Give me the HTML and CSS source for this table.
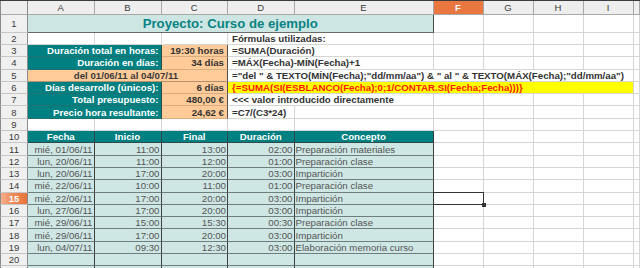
FILE: index.html
```html
<!DOCTYPE html>
<html lang="es">
<head>
<meta charset="utf-8">
<title>Proyecto: Curso de ejemplo</title>
<link rel="stylesheet" href="styles.css">
</head>
<body>
<div class="sheet">
  <div class="corner"></div>
  <div class="ch">A</div><div class="ch">B</div><div class="ch">C</div><div class="ch">D</div><div class="ch">E</div>
  <div class="ch ch-sel">F</div><div class="ch">G</div><div class="ch">H</div><div class="ch">I</div><div class="ch"></div>

  <div class="rh">1</div>
  <div class="title span5">Proyecto: Curso de ejemplo</div>
  <div class="c"></div><div class="c"></div><div class="c"></div><div class="c"></div><div class="c"></div>

  <div class="rh">2</div>
  <div class="c"></div><div class="c"></div><div class="c"></div>
  <div class="c f span2">Fórmulas utilizadas:</div>
  <div class="c"></div><div class="c"></div><div class="c"></div><div class="c"></div><div class="c"></div>

  <div class="rh">3</div>
  <div class="lab span2">Duración total en horas:</div>
  <div class="val">19:30 horas</div>
  <div class="c f span2">=SUMA(Duración)</div>
  <div class="c"></div><div class="c"></div><div class="c"></div><div class="c"></div><div class="c"></div>

  <div class="rh">4</div>
  <div class="lab span2">Duración en días:</div>
  <div class="val">34 días</div>
  <div class="c f span2">=MÁX(Fecha)-MÍN(Fecha)+1</div>
  <div class="c"></div><div class="c"></div><div class="c"></div><div class="c"></div><div class="c"></div>

  <div class="rh">5</div>
  <div class="val val-center span3">del 01/06/11 al 04/07/11</div>
  <div class="c f span6">="del " &amp; TEXTO(MÍN(Fecha);"dd/mm/aa") &amp; " al " &amp; TEXTO(MÁX(Fecha);"dd/mm/aa")</div>
  <div class="c"></div>

  <div class="rh">6</div>
  <div class="lab span2">Días desarrollo (únicos):</div>
  <div class="val">6 días</div>
  <div class="c f f-array span6">{=SUMA(SI(ESBLANCO(Fecha);0;1/CONTAR.SI(Fecha;Fecha)))}</div>
  <div class="c"></div>

  <div class="rh">7</div>
  <div class="lab span2">Total presupuesto:</div>
  <div class="val">480,00 €</div>
  <div class="c f span2">&lt;&lt;&lt; valor introducido directamente</div>
  <div class="c"></div><div class="c"></div><div class="c"></div><div class="c"></div><div class="c"></div>

  <div class="rh">8</div>
  <div class="lab span2">Precio hora resultante:</div>
  <div class="val">24,62 €</div>
  <div class="c f">=C7/(C3*24)</div>
  <div class="c"></div>
  <div class="c"></div><div class="c"></div><div class="c"></div><div class="c"></div><div class="c"></div>

  <div class="rh">9</div>
  <div class="c"></div><div class="c"></div><div class="c"></div><div class="c"></div><div class="c"></div>
  <div class="c"></div><div class="c"></div><div class="c"></div><div class="c"></div><div class="c"></div>

  <div class="rh">10</div>
  <div class="th">Fecha</div><div class="th">Inicio</div><div class="th">Final</div><div class="th">Duración</div><div class="th th-last">Concepto</div>
  <div class="c"></div><div class="c"></div><div class="c"></div><div class="c"></div><div class="c"></div>

  <div class="rh">11</div>
  <div class="td">mié, 01/06/11</div><div class="td">11:00</div><div class="td">13:00</div><div class="td">02:00</div><div class="td td-text">Preparación materiales</div>
  <div class="c"></div><div class="c"></div><div class="c"></div><div class="c"></div><div class="c"></div>

  <div class="rh">12</div>
  <div class="td">lun, 20/06/11</div><div class="td">11:00</div><div class="td">12:00</div><div class="td">01:00</div><div class="td td-text">Preparación clase</div>
  <div class="c"></div><div class="c"></div><div class="c"></div><div class="c"></div><div class="c"></div>

  <div class="rh">13</div>
  <div class="td">lun, 20/06/11</div><div class="td">17:00</div><div class="td">20:00</div><div class="td">03:00</div><div class="td td-text">Impartición</div>
  <div class="c"></div><div class="c"></div><div class="c"></div><div class="c"></div><div class="c"></div>

  <div class="rh">14</div>
  <div class="td">mié, 22/06/11</div><div class="td">10:00</div><div class="td">11:00</div><div class="td">01:00</div><div class="td td-text">Preparación clase</div>
  <div class="c"></div><div class="c"></div><div class="c"></div><div class="c"></div><div class="c"></div>

  <div class="rh rh-sel">15</div>
  <div class="td">mié, 22/06/11</div><div class="td">17:00</div><div class="td">20:00</div><div class="td">03:00</div><div class="td td-text">Impartición</div>
  <div class="c cursor"></div><div class="c"></div><div class="c"></div><div class="c"></div><div class="c"></div>

  <div class="rh">16</div>
  <div class="td">lun, 27/06/11</div><div class="td">17:00</div><div class="td">20:00</div><div class="td">03:00</div><div class="td td-text">Impartición</div>
  <div class="c"></div><div class="c"></div><div class="c"></div><div class="c"></div><div class="c"></div>

  <div class="rh">17</div>
  <div class="td">mié, 29/06/11</div><div class="td">15:00</div><div class="td">15:30</div><div class="td">00:30</div><div class="td td-text">Preparación clase</div>
  <div class="c"></div><div class="c"></div><div class="c"></div><div class="c"></div><div class="c"></div>

  <div class="rh">18</div>
  <div class="td">mié, 29/06/11</div><div class="td">17:00</div><div class="td">20:00</div><div class="td">03:00</div><div class="td td-text">Impartición</div>
  <div class="c"></div><div class="c"></div><div class="c"></div><div class="c"></div><div class="c"></div>

  <div class="rh">19</div>
  <div class="td">lun, 04/07/11</div><div class="td">09:30</div><div class="td">12:30</div><div class="td">03:00</div><div class="td td-text">Elaboración memoria curso</div>
  <div class="c"></div><div class="c"></div><div class="c"></div><div class="c"></div><div class="c"></div>

  <div class="rh">20</div>
  <div class="td"></div><div class="td"></div><div class="td"></div><div class="td"></div><div class="td"></div>
  <div class="c"></div><div class="c"></div><div class="c"></div><div class="c"></div><div class="c"></div>

  <div class="rh">21</div>
  <div class="td"></div><div class="td"></div><div class="td"></div><div class="td"></div><div class="td"></div>
  <div class="c"></div><div class="c"></div><div class="c"></div><div class="c"></div><div class="c"></div>
</div>
</body>
</html>
```

FILE: styles.css
```css
html, body {
  margin: 0;
  padding: 0;
  background: #ffffff;
  overflow: hidden;
}

.sheet {
  display: grid;
  grid-template-columns: 28px 66.5px 67px 66.5px 66.5px 139px 50px 50px 50px 50px 1fr;
  grid-template-rows: 14px 17.7px repeat(20, 12.3px);
  width: 640px;
  height: 268px;
  overflow: hidden;
  border-top: 1px solid #3c3c3c;
  box-sizing: border-box;
  font-family: "Liberation Sans", Arial, sans-serif;
  font-size: 9.7px;
  line-height: 11px;
  color: #333333;
}

.sheet > div {
  box-sizing: border-box;
  display: flex;
  align-items: center;
  white-space: nowrap;
  overflow: visible;
  min-width: 0;
}

.span2 { grid-column: span 2; }
.span3 { grid-column: span 3; }
.span5 { grid-column: span 5; }
.span6 { grid-column: span 6; }

.corner {
  background: #eeeeee;
  border-left: 1px solid #8a8a8a;
  border-right: 1px solid #8a8a8a;
  border-bottom: 1px solid #a8a8a8;
}

.ch {
  background: #eeeeee;
  justify-content: center;
  border-right: 1px solid #a8a8a8;
  border-bottom: 1px solid #a8a8a8;
  color: #3a3a3a;
  font-size: 9.5px;
}

.ch-sel {
  background: #e9773f;
  color: #ffffff;
  font-weight: bold;
}

.rh {
  background: #f0f0f0;
  justify-content: center;
  border-left: 1px solid #8a8a8a;
  border-right: 1px solid #8a8a8a;
  border-bottom: 1px solid #c6c6c6;
  color: #3a3a3a;
  font-size: 9.5px;
}

.rh-sel {
  background: linear-gradient(to right, #f6b08c 0%, #ee8a58 45%, #e8733b 100%);
  color: #ffffff;
  font-weight: bold;
}

.c {
  border-right: 1px solid #d6d6d6;
  border-bottom: 1px solid #d6d6d6;
  background: #ffffff;
}

.title {
  background: #cde6e3;
  color: #0a8383;
  font-weight: bold;
  font-size: 13.2px;
  justify-content: center;
  border-right: 1px solid #4a4a4a;
  border-bottom: 1px solid #6a6a6a;
}

.f {
  font-weight: bold;
  color: #333333;
  padding-left: 4px;
  position: relative;
  z-index: 1;
}

.f-array {
  background: #ffff00;
  color: #ff1a00;
}

.lab {
  background: #008080;
  color: #ffffff;
  font-weight: bold;
  justify-content: flex-end;
  padding-right: 2px;
  border-right: 1px solid #2b4f4f;
  border-bottom: 1px solid #1f7070;
}

.val {
  background: #ffcc99;
  color: #333333;
  font-weight: bold;
  justify-content: flex-end;
  padding-right: 3px;
  border-right: 1px solid #4f4f4f;
  border-bottom: 1px solid #d9ad80;
}

.val-center {
  justify-content: center;
  color: #3a3a3a;
  border-bottom: 1px solid #b49270;
}

.th {
  background: #008080;
  color: #ffffff;
  font-weight: bold;
  justify-content: center;
  border-right: 1px solid #2f4a4a;
  border-bottom: 1px solid #2f4a4a;
}

.th-last {
  border-right: 1px solid #3a3a3a;
}

.td {
  background: #cfe7e4;
  color: #555555;
  justify-content: flex-end;
  padding-right: 1px;
  border-right: 1px solid #3f3f3f;
  border-bottom: 1px solid #6f7f7d;
}

.td-text {
  justify-content: flex-start;
  padding-left: 1px;
  border-right: 1px solid #3f3f3f;
}

.cursor {
  position: relative;
}

.cursor::after {
  content: "";
  position: absolute;
  left: -1px;
  top: -1px;
  right: -1px;
  bottom: -1px;
  border: 1.5px solid #333333;
}

.cursor::before {
  content: "";
  position: absolute;
  right: -3px;
  bottom: -3px;
  width: 4px;
  height: 4px;
  background: #333333;
  z-index: 2;
}
```
